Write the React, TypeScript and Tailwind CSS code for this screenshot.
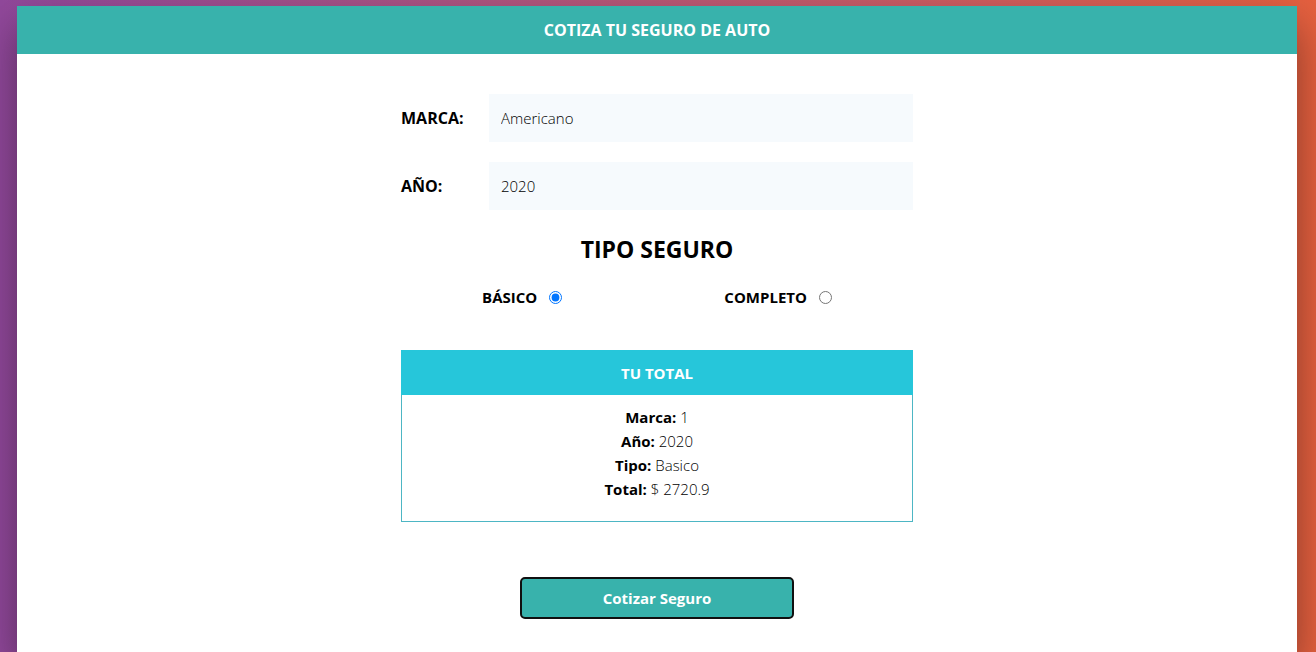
import { useState } from "react";

const brands = ["Americano", "Europeo", "Asiatico"];
const years = ["2021", "2020", "2019", "2018", "2017", "2016"];

const selectClass =
  "h-12 min-w-0 flex-1 appearance-none bg-[#f6fafd] px-3 font-[350] text-black outline-none";

interface SelectFieldProps {
  id: string;
  label: string;
  value: string;
  options: string[];
  onChange: (value: string) => void;
}

function SelectField({ id, label, value, options, onChange }: SelectFieldProps) {
  return (
    <div className="flex items-center">
      <label htmlFor={id} className="w-22 shrink-0 text-base font-bold uppercase">
        {label}
      </label>
      <select id={id} value={value} onChange={(e) => onChange(e.target.value)} className={selectClass}>
        {options.map((option) => (
          <option key={option}>{option}</option>
        ))}
      </select>
    </div>
  );
}

interface PlanOptionProps {
  id: string;
  label: string;
  checked: boolean;
  onSelect: () => void;
}

function PlanOption({ id, label, checked, onSelect }: PlanOptionProps) {
  return (
    <div className="flex items-center gap-3">
      <label htmlFor={id} className="font-bold uppercase">
        {label}
      </label>
      <input id={id} type="radio" name="plan" checked={checked} onChange={onSelect} className="size-[13px]" />
    </div>
  );
}

export default function App() {
  const [brand, setBrand] = useState("Americano");
  const [year, setYear] = useState("2020");
  const [plan, setPlan] = useState("Basico");

  const rows = [
    ["Marca:", String(brands.indexOf(brand) + 1)],
    ["Año:", year],
    ["Tipo:", plan],
    ["Total:", "$ 2720.9"],
  ];

  return (
    <div className="flex min-h-screen flex-col bg-linear-to-r from-[#91489b] to-[#e5603e] pt-1.5 pr-[19px] pl-[17px] font-['Open_Sans','Noto_Sans',sans-serif] text-[15px] leading-6 text-black">
      <main className="flex flex-1 flex-col bg-white shadow-[0_20px_40px_rgba(0,0,0,0.4)]">
        <header className="bg-[#38b2ac] py-3 text-center">
          <h1 className="text-base font-bold text-white uppercase">Cotiza tu seguro de auto</h1>
        </header>

        <form className="mx-auto flex w-2/5 flex-col pt-10 pb-8" onSubmit={(e) => e.preventDefault()}>
          <div className="flex flex-col gap-5">
            <SelectField id="brand" label="Marca:" value={brand} options={brands} onChange={setBrand} />
            <SelectField id="year" label="Año:" value={year} options={years} onChange={setYear} />
          </div>

          <h2 className="mt-5 text-center text-[23px] leading-[38px] font-bold uppercase">Tipo seguro</h2>
          <div className="mt-[17px] flex justify-around">
            <PlanOption id="basic" label="Básico" checked={plan === "Basico"} onSelect={() => setPlan("Basico")} />
            <PlanOption id="full" label="Completo" checked={plan === "Completo"} onSelect={() => setPlan("Completo")} />
          </div>

          <section className="mt-[41px] border border-[#4db6c4] pb-5 text-center">
            <h3 className="-mx-px -mt-px bg-[#26c6da] pt-[11px] pb-2.5 font-bold text-white uppercase">Tu total</h3>
            <div className="pt-2.5 font-[350]">
              {rows.map(([name, value]) => (
                <p key={name}>
                  <span className="font-bold">{name}</span> {value}
                </p>
              ))}
            </div>
          </section>

          <button
            type="submit"
            className="mx-auto mt-[55px] h-[42px] w-[274px] rounded-[5px] border-2 border-[#101010] bg-[#38b2ac] font-bold text-white"
          >
            Cotizar Seguro
          </button>
        </form>
      </main>
    </div>
  );
}
